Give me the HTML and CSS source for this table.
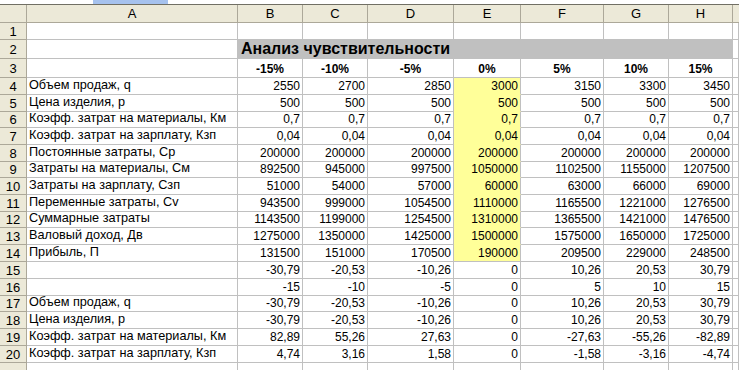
FILE: index.html
```html
<!DOCTYPE html>
<html lang="ru">
<head>
<meta charset="utf-8">
<title>Анализ чувствительности</title>
<link rel="stylesheet" href="styles.css">
</head>
<body>
<div class="topbar"><span class="tb-white"></span><span class="tb-blue"></span></div>
<div class="sheet">
  <div class="corner"></div><div class="ch">A</div><div class="ch">B</div><div class="ch">C</div><div class="ch">D</div><div class="ch">E</div><div class="ch">F</div><div class="ch">G</div><div class="ch">H</div><div class="ch last"></div>

  <div class="rh">1</div><div class="c"></div><div class="c"></div><div class="c"></div><div class="c"></div><div class="c"></div><div class="c"></div><div class="c"></div><div class="c"></div><div class="c"></div>

  <div class="rh">2</div><div class="c"></div><div class="title">Анализ чувствительности</div><div class="c"></div>

  <div class="rh">3</div><div class="c"></div><div class="c p">-15%</div><div class="c p">-10%</div><div class="c p">-5%</div><div class="c p">0%</div><div class="c p">5%</div><div class="c p">10%</div><div class="c p">15%</div><div class="c"></div>

  <div class="rh">4</div><div class="c t">Объем продаж, q</div><div class="c n">2550</div><div class="c n">2700</div><div class="c n">2850</div><div class="c n y">3000</div><div class="c n">3150</div><div class="c n">3300</div><div class="c n">3450</div><div class="c"></div>

  <div class="rh">5</div><div class="c t">Цена изделия, р</div><div class="c n">500</div><div class="c n">500</div><div class="c n">500</div><div class="c n y">500</div><div class="c n">500</div><div class="c n">500</div><div class="c n">500</div><div class="c"></div>

  <div class="rh">6</div><div class="c t">Коэфф. затрат на материалы, Км</div><div class="c n">0,7</div><div class="c n">0,7</div><div class="c n">0,7</div><div class="c n y">0,7</div><div class="c n">0,7</div><div class="c n">0,7</div><div class="c n">0,7</div><div class="c"></div>

  <div class="rh">7</div><div class="c t">Коэфф. затрат на зарплату, Кзп</div><div class="c n">0,04</div><div class="c n">0,04</div><div class="c n">0,04</div><div class="c n y">0,04</div><div class="c n">0,04</div><div class="c n">0,04</div><div class="c n">0,04</div><div class="c"></div>

  <div class="rh">8</div><div class="c t">Постоянные затраты, Ср</div><div class="c n">200000</div><div class="c n">200000</div><div class="c n">200000</div><div class="c n y">200000</div><div class="c n">200000</div><div class="c n">200000</div><div class="c n">200000</div><div class="c"></div>

  <div class="rh">9</div><div class="c t">Затраты на материалы, См</div><div class="c n">892500</div><div class="c n">945000</div><div class="c n">997500</div><div class="c n y">1050000</div><div class="c n">1102500</div><div class="c n">1155000</div><div class="c n">1207500</div><div class="c"></div>

  <div class="rh">10</div><div class="c t">Затраты на зарплату, Сзп</div><div class="c n">51000</div><div class="c n">54000</div><div class="c n">57000</div><div class="c n y">60000</div><div class="c n">63000</div><div class="c n">66000</div><div class="c n">69000</div><div class="c"></div>

  <div class="rh">11</div><div class="c t">Переменные затраты, Сv</div><div class="c n">943500</div><div class="c n">999000</div><div class="c n">1054500</div><div class="c n y">1110000</div><div class="c n">1165500</div><div class="c n">1221000</div><div class="c n">1276500</div><div class="c"></div>

  <div class="rh">12</div><div class="c t">Суммарные затраты</div><div class="c n">1143500</div><div class="c n">1199000</div><div class="c n">1254500</div><div class="c n y">1310000</div><div class="c n">1365500</div><div class="c n">1421000</div><div class="c n">1476500</div><div class="c"></div>

  <div class="rh">13</div><div class="c t">Валовый доход, Дв</div><div class="c n">1275000</div><div class="c n">1350000</div><div class="c n">1425000</div><div class="c n y">1500000</div><div class="c n">1575000</div><div class="c n">1650000</div><div class="c n">1725000</div><div class="c"></div>

  <div class="rh">14</div><div class="c t">Прибыль, П</div><div class="c n">131500</div><div class="c n">151000</div><div class="c n">170500</div><div class="c n y y-end">190000</div><div class="c n">209500</div><div class="c n">229000</div><div class="c n">248500</div><div class="c"></div>

  <div class="rh">15</div><div class="c"></div><div class="c n">-30,79</div><div class="c n">-20,53</div><div class="c n">-10,26</div><div class="c n">0</div><div class="c n">10,26</div><div class="c n">20,53</div><div class="c n">30,79</div><div class="c"></div>

  <div class="rh">16</div><div class="c"></div><div class="c n">-15</div><div class="c n">-10</div><div class="c n">-5</div><div class="c n">0</div><div class="c n">5</div><div class="c n">10</div><div class="c n">15</div><div class="c"></div>

  <div class="rh">17</div><div class="c t">Объем продаж, q</div><div class="c n">-30,79</div><div class="c n">-20,53</div><div class="c n">-10,26</div><div class="c n">0</div><div class="c n">10,26</div><div class="c n">20,53</div><div class="c n">30,79</div><div class="c"></div>

  <div class="rh">18</div><div class="c t">Цена изделия, р</div><div class="c n">-30,79</div><div class="c n">-20,53</div><div class="c n">-10,26</div><div class="c n">0</div><div class="c n">10,26</div><div class="c n">20,53</div><div class="c n">30,79</div><div class="c"></div>

  <div class="rh">19</div><div class="c t">Коэфф. затрат на материалы, Км</div><div class="c n">82,89</div><div class="c n">55,26</div><div class="c n">27,63</div><div class="c n">0</div><div class="c n">-27,63</div><div class="c n">-55,26</div><div class="c n">-82,89</div><div class="c"></div>

  <div class="rh">20</div><div class="c t">Коэфф. затрат на зарплату, Кзп</div><div class="c n">4,74</div><div class="c n">3,16</div><div class="c n">1,58</div><div class="c n">0</div><div class="c n">-1,58</div><div class="c n">-3,16</div><div class="c n">-4,74</div><div class="c"></div>

  <div class="rh"></div><div class="c"></div><div class="c"></div><div class="c"></div><div class="c"></div><div class="c"></div><div class="c"></div><div class="c"></div><div class="c"></div><div class="c"></div>
</div>
</body>
</html>
```

FILE: styles.css
```css
html, body {
  margin: 0;
  padding: 0;
  background: #ffffff;
  overflow: hidden;
}

body {
  font-family: "Liberation Sans", Arial, sans-serif;
  font-size: 12px;
  color: #000000;
}

.topbar {
  display: flex;
  height: 4px;
  border-bottom: 1px solid #716f64;
}

.tb-white {
  width: 93px;
  background: #ffffff;
}

.tb-blue {
  width: 75px;
  background: #a6c2ee;
}

.sheet {
  display: grid;
  grid-template-columns: 27px 211px 65px 65px 86px 67px 83px 65px 64px 1fr;
  grid-template-rows: 18px 17px 19px 19px 17px 17px 16px 17px 17px 16px 17px 17px 16px 17px 17px 17px 17px 16px 17px 17px 17px 17px;
}

.sheet > div {
  box-sizing: border-box;
  border-right: 1px solid #c0c0c0;
  border-bottom: 1px solid #c0c0c0;
  display: flex;
  align-items: flex-end;
  line-height: 1;
  padding: 0 2px 2px;
  white-space: nowrap;
  overflow: hidden;
}

.sheet > .corner,
.sheet > .ch {
  background: #ece9d8;
  border-right-color: #aca899;
  border-bottom-color: #aca899;
  justify-content: center;
  align-items: center;
  padding: 0;
  font-size: 13px;
}

.sheet > .ch.last {
  border-right: 0;
}

.sheet > .rh {
  background: #ece9d8;
  border-right-color: #aca899;
  border-bottom-color: #aca899;
  justify-content: center;
  align-items: center;
  padding: 0;
  font-size: 13px;
}

.sheet > .t {
  justify-content: flex-start;
  font-size: 12.7px;
}

.sheet > .n {
  justify-content: flex-end;
}

.sheet > .p {
  justify-content: center;
  font-weight: bold;
}

.sheet > .y {
  background: #ffff99;
  border-bottom-color: #ffff99;
}

.sheet > .y-end {
  border-bottom-color: #c0c0c0;
}

.sheet > .title {
  grid-column: span 7;
  background: #c0c0c0;
  font-weight: bold;
  font-size: 16px;
  padding: 0 3px 1px;
}
```
